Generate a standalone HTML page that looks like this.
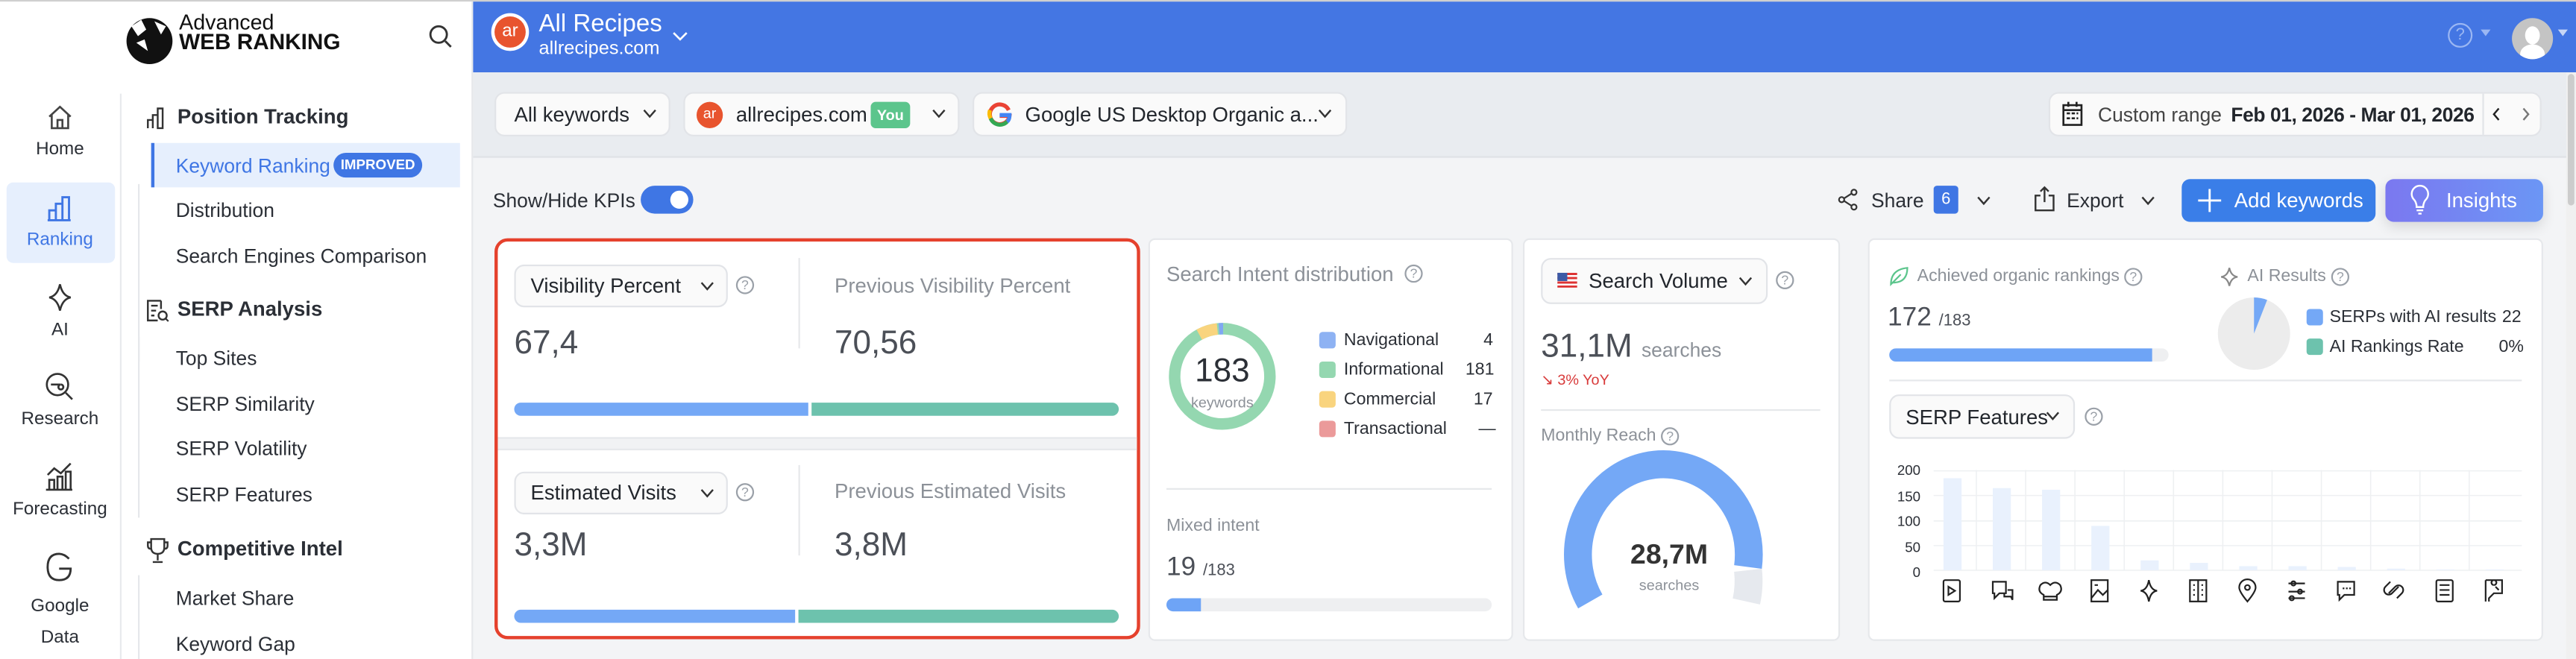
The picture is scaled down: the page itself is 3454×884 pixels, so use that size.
<!DOCTYPE html>
<html><head><meta charset="utf-8">
<style>
*{box-sizing:border-box;margin:0;padding:0}
html,body{width:3454px;height:884px;overflow:hidden;background:#f3f4f6}
#w{position:absolute;left:0;top:0;width:1568px;height:401px;transform-origin:0 0;transform:scale(2.2028,2.2045);font-family:"Liberation Sans",sans-serif;color:#2b2f36;background:#f3f4f6}
.a{position:absolute;white-space:nowrap}
.t{font-size:12px}
.card{position:absolute;background:#fff;border:1px solid #e6e8eb;border-radius:4px}
.dd{position:absolute;background:#fafafa;border:1px solid #e2e4e8;border-radius:6px;font-size:12.5px;color:#22262c}
.q{position:absolute;width:11px;height:11px;border:1px solid #9aa0a8;border-radius:50%;font-size:8px;color:#9aa0a8;text-align:center;line-height:10px}
.gray{color:#8c9198}
svg{position:absolute;overflow:visible}
</style></head><body><div id="w">
<div class="a" style="left:0;top:0;width:1568px;height:1px;background:#cfcfcf"></div>
<div class="a" style="left:0;top:1px;width:288px;height:400px;background:#fff;border-right:1px solid #e6e8eb"></div>
<div class="a" style="left:73px;top:57px;width:1px;height:344px;background:#e8eaed"></div>
<svg style="left:74px;top:6px" width="34" height="34" viewBox="0 0 34 34"><circle cx="17" cy="19" r="14" fill="#111"/><path d="M6 10 L12 6 L15 12 L10 16 Z M20 7 L27 10 L24 15 Z M9 20 L14 18 L16 25 Z" fill="#fff"/></svg>
<div class="a" style="left:109px;top:8px;font-size:13px;line-height:12px;color:#111">Advanced<br><b style="font-size:13.5px">WEB RANKING</b></div>
<svg style="left:261px;top:15px" width="14" height="14" viewBox="0 0 14 14"><circle cx="6" cy="6" r="5" fill="none" stroke="#333" stroke-width="1.3"/><path d="M10 10 L13.5 13.5" stroke="#333" stroke-width="1.3"/></svg>
<svg style="left:28px;top:63px" width="17" height="17" viewBox="0 0 17 17"><path d="M2 8 L8.5 2 L15 8 M3.5 7 V15 H13.5 V7 M7 15 V10 H10 V15" fill="none" stroke="#444" stroke-width="1.2"/></svg>
<div class="a" style="left:0;width:73px;top:85px;text-align:center;font-size:11px">Home</div>
<div class="a" style="left:4px;top:111px;width:66px;height:49px;background:#e6effd;border-radius:4px"></div>
<svg style="left:28px;top:119px" width="17" height="16" viewBox="0 0 17 16"><path d="M2 15 V9 H6 V15 M6 15 V5 H10 V15 M10 15 V1 H14 V15 Z M1 15 H15" fill="none" stroke="#3f76e4" stroke-width="1.3"/></svg>
<div class="a" style="left:0;width:73px;top:140px;text-align:center;font-size:11px;color:#3f76e4">Ranking</div>
<svg style="left:29px;top:172px" width="15" height="18" viewBox="0 0 15 18"><path d="M7.5 1 Q9 8 14 9 Q9 10 7.5 17 Q6 10 1 9 Q6 8 7.5 1Z" fill="none" stroke="#333" stroke-width="1.2"/></svg>
<div class="a" style="left:0;width:73px;top:195px;text-align:center;font-size:11px">AI</div>
<svg style="left:27px;top:226px" width="18" height="18" viewBox="0 0 18 18"><circle cx="8" cy="8" r="6.5" fill="none" stroke="#333" stroke-width="1.2"/><path d="M13 13 L17 17 M4 8 H10 M10 8 a1.5 1.5 0 1 0 0.1 0" fill="none" stroke="#333" stroke-width="1.2"/></svg>
<div class="a" style="left:0;width:73px;top:249px;text-align:center;font-size:11px">Research</div>
<svg style="left:28px;top:281px" width="17" height="18" viewBox="0 0 17 18"><path d="M1 8 L5 4 L9 7 L15 1 M2 17 V11 H5 V17 M7 17 V9 H10 V17 M12 17 V6 H15 V17 M0 17 H16" fill="none" stroke="#333" stroke-width="1.2"/></svg>
<div class="a" style="left:0;width:73px;top:304px;text-align:center;font-size:11px">Forecasting</div>
<svg style="left:28px;top:336px" width="17" height="18" viewBox="0 0 17 18"><path d="M14 4 Q11 1 8 1 Q1 1 1 9 Q1 17 8 17 Q15 17 15 10 H8" fill="none" stroke="#333" stroke-width="1.3"/></svg>
<div class="a" style="left:0;width:73px;top:360px;text-align:center;font-size:11px;line-height:19px">Google<br>Data</div>
<svg style="left:89px;top:65px" width="14" height="14" viewBox="0 0 14 14"><path d="M1 13 V8 H4 V13 M4 13 V5 H7 V13 M7 13 V1 H10 V13 Z" fill="none" stroke="#333" stroke-width="1.1"/></svg>
<div class="a" style="left:108px;top:64px;font-size:12.5px;font-weight:bold">Position Tracking</div>
<div class="a" style="left:84px;top:112px;width:1px;height:108px;background:#e6e8eb"></div>
<div class="a" style="left:92px;top:87px;width:188px;height:27px;background:#e6effd;border-left:2px solid #3f76e4"></div>
<div class="a t" style="left:107px;top:94px;color:#3f76e4">Keyword Ranking</div>
<div class="a" style="left:203px;top:93px;width:54px;height:15px;border-radius:8px;background:#3f76e4;color:#fff;font-size:8.5px;font-weight:bold;text-align:center;line-height:15px">IMPROVED</div>
<div class="a t" style="left:107px;top:121px">Distribution</div>
<div class="a t" style="left:107px;top:149px">Search Engines Comparison</div>
<svg style="left:89px;top:182px" width="14" height="14" viewBox="0 0 14 14"><path d="M9 1 H1 V13 H7 M9 1 V6 M3 4 H7 M3 7 H6 M3 10 H5" fill="none" stroke="#333" stroke-width="1.1"/><circle cx="10" cy="10" r="2.5" fill="none" stroke="#333" stroke-width="1.1"/><path d="M12 12 L13.5 13.5" stroke="#333"/></svg>
<div class="a" style="left:108px;top:181px;font-size:12.5px;font-weight:bold">SERP Analysis</div>
<div class="a" style="left:84px;top:205px;width:1px;height:110px;background:#e6e8eb"></div>
<div class="a t" style="left:107px;top:211px">Top Sites</div>
<div class="a t" style="left:107px;top:239px">SERP Similarity</div>
<div class="a t" style="left:107px;top:266px">SERP Volatility</div>
<div class="a t" style="left:107px;top:294px">SERP Features</div>
<svg style="left:89px;top:327px" width="14" height="16" viewBox="0 0 14 16"><path d="M3 1 H11 V6 Q11 10 7 10 Q3 10 3 6 Z M3 3 H1 V5 Q1 7 3 7 M11 3 H13 V5 Q13 7 11 7 M7 10 V14 M4 15 H10" fill="none" stroke="#333" stroke-width="1.1"/></svg>
<div class="a" style="left:108px;top:327px;font-size:12.5px;font-weight:bold">Competitive Intel</div>
<div class="a" style="left:84px;top:350px;width:1px;height:51px;background:#e6e8eb"></div>
<div class="a t" style="left:107px;top:357px">Market Share</div>
<div class="a t" style="left:107px;top:385px">Keyword Gap</div>
<!-- header -->
<div class="a" style="left:288px;top:1px;width:1280px;height:43px;background:#4476e3"></div>
<div class="a" style="left:299px;top:8px;width:23px;height:23px;border-radius:50%;background:#fff"></div>
<div class="a" style="left:301px;top:10px;width:19px;height:19px;border-radius:50%;background:#e8542e;color:#fff;font-size:11px;text-align:center;line-height:18px">ar</div>
<div class="a" style="left:328px;top:6px;font-size:15px;color:#fff">All Recipes</div>
<div class="a" style="left:328px;top:24px;font-size:11.5px;color:#fff">allrecipes.com</div>
<svg style="left:409px;top:19px" width="10" height="6" viewBox="0 0 10 6"><path d="M1 1 L5 5 L9 1" fill="none" stroke="#fff" stroke-width="1.2"/></svg>
<div class="a" style="left:1490px;top:14px;width:15px;height:15px;border:1.3px solid #9bb7f3;border-radius:50%;color:#9bb7f3;font-size:10px;text-align:center;line-height:13px">?</div>
<div class="a" style="left:1510px;top:18px;width:0;height:0;border:3px solid transparent;border-top:4px solid #9bb7f3"></div>
<div class="a" style="left:1529px;top:11px;width:25px;height:25px;border-radius:50%;background:#c4c4c4;overflow:hidden"><div style="position:absolute;left:8px;top:5px;width:9px;height:11px;border-radius:50%;background:#fff"></div><div style="position:absolute;left:5px;top:16px;width:15px;height:12px;border-radius:50%;background:#fff"></div></div>
<div class="a" style="left:1557px;top:18px;width:0;height:0;border:3px solid transparent;border-top:4px solid #c7d6f6"></div>
<!-- filter bar -->
<div class="a" style="left:288px;top:44px;width:1280px;height:52px;background:#e9ecf0;border-bottom:1px solid #dfe2e6"></div>
<div class="dd" style="left:301px;top:56px;width:107px;height:27px"><span class="a" style="left:11px;top:6px">All keywords</span></div>
<svg style="left:391px;top:66px" width="9" height="6" viewBox="0 0 9 6"><path d="M1 1 L4.5 5 L8 1" fill="none" stroke="#333" stroke-width="1.1"/></svg>
<div class="dd" style="left:416px;top:56px;width:168px;height:27px"><span class="a" style="left:7px;top:5px;width:16px;height:16px;border-radius:50%;background:#e8542e;color:#fff;font-size:9px;text-align:center;line-height:15px">ar</span><span class="a" style="left:31px;top:6px">allrecipes.com</span><span class="a" style="left:113px;top:5px;width:24px;height:16px;border-radius:3px;background:#5cc58c;color:#fff;font-size:9px;font-weight:bold;text-align:center;line-height:16px">You</span></div>
<svg style="left:567px;top:66px" width="9" height="6" viewBox="0 0 9 6"><path d="M1 1 L4.5 5 L8 1" fill="none" stroke="#333" stroke-width="1.1"/></svg>
<div class="dd" style="left:592px;top:56px;width:228px;height:27px"><span class="a" style="left:31px;top:6px">Google US Desktop Organic a...</span></div>
<svg style="left:601px;top:62px" width="15" height="15" viewBox="0 0 15 15"><path d="M13 5 A6 6 0 1 0 13.5 8.5 H7.5" fill="none" stroke="#ea4335" stroke-width="2.4"/><path d="M2 10 A6 6 0 0 0 12 12" fill="none" stroke="#34a853" stroke-width="2.4"/><path d="M7.5 8 H13.5 Q13.5 11 12 12" fill="none" stroke="#4285f4" stroke-width="2.4"/><path d="M1.6 5 A6 6 0 0 0 2 10" fill="none" stroke="#fbbc05" stroke-width="2.4"/></svg>
<svg style="left:802px;top:66px" width="9" height="6" viewBox="0 0 9 6"><path d="M1 1 L4.5 5 L8 1" fill="none" stroke="#333" stroke-width="1.1"/></svg>
<div class="dd" style="left:1247px;top:56px;width:300px;height:27px;font-size:12px"><span class="a" style="left:29px;top:6px;color:#444">Custom range</span><span class="a" style="left:110px;top:6px;font-weight:bold;color:#22262c;letter-spacing:-0.2px">Feb 01, 2026 - Mar 01, 2026</span><span class="a" style="left:263px;top:0;width:1px;height:25px;background:#e2e4e8"></span></div>
<svg style="left:1255px;top:61px" width="13" height="16" viewBox="0 0 13 16"><rect x="1" y="3" width="11" height="12" fill="none" stroke="#222" stroke-width="1.2"/><path d="M1 6 H12 M4 1 V4 M9 1 V4" stroke="#222" stroke-width="1.2"/><path d="M3 8 h2 M6 8 h2 M9 8 h1 M3 11 h2 M6 11 h2 M9 11 h1" stroke="#222" stroke-width="1.2"/></svg>
<svg style="left:1517px;top:65px" width="5" height="9" viewBox="0 0 5 9"><path d="M4 1 L1 4.5 L4 8" fill="none" stroke="#222" stroke-width="1.1"/></svg>
<svg style="left:1535px;top:65px" width="5" height="9" viewBox="0 0 5 9"><path d="M1 1 L4 4.5 L1 8" fill="none" stroke="#777" stroke-width="1.1"/></svg>
<!-- toolbar -->
<div class="a t" style="left:300px;top:115px">Show/Hide KPIs</div>
<div class="a" style="left:390px;top:113px;width:32px;height:17px;border-radius:9px;background:#3f76e4"><div style="position:absolute;left:18px;top:3px;width:11px;height:11px;border-radius:50%;background:#fff"></div></div>
<svg style="left:1119px;top:115px" width="12" height="13" viewBox="0 0 12 13"><circle cx="9.5" cy="2" r="1.6" fill="none" stroke="#333"/><circle cx="2" cy="6.5" r="1.6" fill="none" stroke="#333"/><circle cx="9.5" cy="11" r="1.6" fill="none" stroke="#333"/><path d="M3.5 5.7 L8 2.8 M3.5 7.3 L8 10.2" stroke="#333"/></svg>
<div class="a t" style="left:1139px;top:115px">Share</div>
<div class="a" style="left:1177px;top:113px;width:15px;height:17px;border-radius:2px;background:#3f76e4;color:#fff;font-size:10px;text-align:center;line-height:17px">6</div>
<svg style="left:1203px;top:119px" width="9" height="6" viewBox="0 0 9 6"><path d="M1 1 L4.5 5 L8 1" fill="none" stroke="#333" stroke-width="1.1"/></svg>
<svg style="left:1238px;top:113px" width="13" height="16" viewBox="0 0 13 16"><path d="M4 6 H1 V15 H12 V6 H9 M6.5 1 V10 M4 3.5 L6.5 1 L9 3.5" fill="none" stroke="#333" stroke-width="1.1"/></svg>
<div class="a t" style="left:1258px;top:115px">Export</div>
<svg style="left:1303px;top:119px" width="9" height="6" viewBox="0 0 9 6"><path d="M1 1 L4.5 5 L8 1" fill="none" stroke="#333" stroke-width="1.1"/></svg>
<div class="a" style="left:1328px;top:109px;width:118px;height:26px;border-radius:5px;background:#3a7ee8"></div>
<svg style="left:1337px;top:114px" width="16" height="16" viewBox="0 0 16 16"><path d="M8 1 V15 M1 8 H15" stroke="#fff" stroke-width="1.3"/></svg>
<div class="a" style="left:1360px;top:115px;font-size:12.5px;color:#fff">Add keywords</div>
<div class="a" style="left:1452px;top:109px;width:96px;height:26px;border-radius:5px;background:linear-gradient(90deg,#7b78f0,#6b96f5);box-shadow:0 3px 8px rgba(0,0,0,.12)"></div>
<svg style="left:1467px;top:113px" width="12" height="18" viewBox="0 0 12 18"><path d="M4 13 Q4 10 2 8 A5 5 0 1 1 10 8 Q8 10 8 13 Z M4 15 H8 M5 17 H7" fill="none" stroke="#fff" stroke-width="1.1"/></svg>
<div class="a" style="left:1489px;top:115px;font-size:12.5px;color:#fff">Insights</div>
<!-- KPI card -->
<div class="card" style="left:301px;top:145px;width:393px;height:244px;border:2px solid #e5412d;border-radius:8px;overflow:hidden">
 <div class="a" style="left:0;top:119px;width:393px;height:8px;background:#f1f2f4;border-top:1px solid #e6e8eb;border-bottom:1px solid #e6e8eb"></div>
</div>
<div class="dd" style="left:313px;top:161px;width:130px;height:26px"><span class="a" style="left:9px;top:5px">Visibility Percent</span></div>
<svg style="left:426px;top:171px" width="9" height="6" viewBox="0 0 9 6"><path d="M1 1 L4.5 5 L8 1" fill="none" stroke="#333" stroke-width="1.1"/></svg>
<div class="q" style="left:448px;top:168px">?</div>
<div class="a" style="left:486px;top:157px;width:1px;height:55px;background:#e6e8eb"></div>
<div class="a gray" style="left:508px;top:167px;font-size:12.5px">Previous Visibility Percent</div>
<div class="a" style="left:313px;top:198px;font-size:20px;color:#4b4f57">67,4</div>
<div class="a" style="left:508px;top:198px;font-size:20px;color:#4b4f57">70,56</div>
<div class="a" style="left:313px;top:245px;width:179px;height:8px;border-radius:4px 0 0 4px;background:#74a8f6"></div>
<div class="a" style="left:494px;top:245px;width:187px;height:8px;border-radius:0 4px 4px 0;background:#6dc2ad"></div>
<div class="dd" style="left:313px;top:287px;width:130px;height:26px"><span class="a" style="left:9px;top:5px">Estimated Visits</span></div>
<svg style="left:426px;top:297px" width="9" height="6" viewBox="0 0 9 6"><path d="M1 1 L4.5 5 L8 1" fill="none" stroke="#333" stroke-width="1.1"/></svg>
<div class="q" style="left:448px;top:294px">?</div>
<div class="a" style="left:486px;top:283px;width:1px;height:55px;background:#e6e8eb"></div>
<div class="a gray" style="left:508px;top:292px;font-size:12.5px">Previous Estimated Visits</div>
<div class="a" style="left:313px;top:321px;font-size:20px;color:#4b4f57">3,3M</div>
<div class="a" style="left:508px;top:321px;font-size:20px;color:#4b4f57">3,8M</div>
<div class="a" style="left:313px;top:371px;width:171px;height:8px;border-radius:4px 0 0 4px;background:#74a8f6"></div>
<div class="a" style="left:486px;top:371px;width:195px;height:8px;border-radius:0 4px 4px 0;background:#6dc2ad"></div>
<!-- intent card -->
<div class="card" style="left:699px;top:145px;width:222px;height:245px"></div>
<div class="a gray" style="left:710px;top:160px;font-size:12.5px">Search Intent distribution</div>
<div class="q" style="left:855px;top:161px">?</div>
<svg style="left:710px;top:195px" width="68" height="68" viewBox="0 0 68 68"><circle cx="34" cy="34" r="29" fill="none" stroke="#94d7b0" stroke-width="7"/><path d="M 20 8.6 A29 29 0 0 1 31 5.2" fill="none" stroke="#f9d47e" stroke-width="7"/><path d="M 32 5.1 A29 29 0 0 1 34.5 5" fill="none" stroke="#7fa8f2" stroke-width="7"/></svg>
<div class="a" style="left:710px;width:68px;top:215px;text-align:center;font-size:20px;color:#2b2f36">183</div>
<div class="a gray" style="left:710px;width:68px;top:240px;text-align:center;font-size:9px">keywords</div>
<div class="a" style="left:803px;top:202px;width:10px;height:10px;border-radius:2px;background:#8eb2f3"></div>
<div class="a" style="left:818px;top:201px;font-size:10.5px">Navigational</div><div class="a" style="left:903px;top:201px;font-size:10.5px">4</div>
<div class="a" style="left:803px;top:220px;width:10px;height:10px;border-radius:2px;background:#94d7b0"></div>
<div class="a" style="left:818px;top:219px;font-size:10.5px">Informational</div><div class="a" style="left:892px;top:219px;font-size:10.5px">181</div>
<div class="a" style="left:803px;top:238px;width:10px;height:10px;border-radius:2px;background:#f9d47e"></div>
<div class="a" style="left:818px;top:237px;font-size:10.5px">Commercial</div><div class="a" style="left:897px;top:237px;font-size:10.5px">17</div>
<div class="a" style="left:803px;top:256px;width:10px;height:10px;border-radius:2px;background:#eb9a9a"></div>
<div class="a" style="left:818px;top:255px;font-size:10.5px">Transactional</div><div class="a" style="left:900px;top:255px;font-size:10.5px">—</div>
<div class="a" style="left:710px;top:297px;width:198px;height:1px;background:#e6e8eb"></div>
<div class="a gray" style="left:710px;top:314px;font-size:10.5px">Mixed intent</div>
<div class="a" style="left:710px;top:337px;font-size:16px;color:#4b4f57">19 <span style="font-size:10px">/183</span></div>
<div class="a" style="left:710px;top:364px;width:198px;height:8px;border-radius:4px;background:#eeeff1"><div style="width:21px;height:8px;border-radius:4px 0 0 4px;background:#6ea4f6"></div></div>
<!-- volume card -->
<div class="card" style="left:927px;top:145px;width:193px;height:245px"></div>
<div class="dd" style="left:938px;top:157px;width:138px;height:28px"><span class="a" style="left:28px;top:6px">Search Volume</span></div>
<div class="a" style="left:948px;top:166px;width:12px;height:9px;background:repeating-linear-gradient(#d33 0 1.3px,#fff 1.3px 2.6px)"><div style="width:6px;height:5px;background:#3c5aa6"></div></div>
<svg style="left:1058px;top:168px" width="9" height="6" viewBox="0 0 9 6"><path d="M1 1 L4.5 5 L8 1" fill="none" stroke="#333" stroke-width="1.1"/></svg>
<div class="q" style="left:1081px;top:165px">?</div>
<div class="a" style="left:938px;top:200px;font-size:20px;color:#4b4f57">31,1M <span style="font-size:12px;color:#8c9198">searches</span></div>
<div class="a" style="left:938px;top:226px;font-size:9px;color:#d83a3a">↘ 3% YoY</div>
<div class="a" style="left:938px;top:249px;width:170px;height:1px;background:#e6e8eb"></div>
<div class="a gray" style="left:938px;top:259px;font-size:10.5px">Monthly Reach</div>
<div class="q" style="left:1011px;top:260px">?</div>
<svg style="left:960px;top:283px" width="112" height="85" viewBox="0 0 112 85"><path d="M8 83 A52 55 0 1 1 104 62" fill="none" stroke="#74a8f6" stroke-width="17"/><path d="M104 64 A52 55 0 0 1 103 83" fill="none" stroke="#e6e9ee" stroke-width="17"/></svg>
<div class="a" style="left:960px;width:112px;top:328px;text-align:center;font-size:17px;font-weight:bold;color:#333">28,7M</div>
<div class="a gray" style="left:960px;width:112px;top:351px;text-align:center;font-size:9px">searches</div>
<!-- right card -->
<div class="card" style="left:1137px;top:145px;width:411px;height:245px"></div>
<svg style="left:1150px;top:162px" width="12" height="12" viewBox="0 0 12 12"><path d="M1 11 Q1 2 11 1 Q11 10 2 10 Z M1 11 L7 5" fill="none" stroke="#5cc58c" stroke-width="1"/></svg>
<div class="a gray" style="left:1167px;top:162px;font-size:10.5px">Achieved organic rankings</div>
<div class="q" style="left:1293px;top:163px">?</div>
<div class="a" style="left:1149px;top:185px;font-size:16px;color:#4b4f57">172 <span style="font-size:10px">/183</span></div>
<div class="a" style="left:1150px;top:212px;width:170px;height:8px;border-radius:4px;background:#eeeff1"><div style="width:160px;height:8px;border-radius:4px 0 0 4px;background:#6ea4f6"></div></div>
<svg style="left:1351px;top:162px" width="12" height="13" viewBox="0 0 12 13"><path d="M6 1 Q7 6 11 6.5 Q7 7 6 12 Q5 7 1 6.5 Q5 6 6 1Z" fill="none" stroke="#888" stroke-width="1"/></svg>
<div class="a gray" style="left:1368px;top:162px;font-size:10.5px">AI Results</div>
<div class="q" style="left:1419px;top:163px">?</div>
<svg style="left:1350px;top:181px" width="44" height="44" viewBox="0 0 44 44"><circle cx="22" cy="22" r="22" fill="#ececec"/><path d="M22 22 L22 0 A22 22 0 0 1 30 1.5 Z" fill="#74a8f6"/></svg>
<div class="a" style="left:1404px;top:188px;width:10px;height:10px;border-radius:2px;background:#74a8f6"></div>
<div class="a" style="left:1418px;top:187px;font-size:10.5px">SERPs with AI results</div><div class="a" style="left:1523px;top:187px;font-size:10.5px">22</div>
<div class="a" style="left:1404px;top:206px;width:10px;height:10px;border-radius:2px;background:#6dc2ad"></div>
<div class="a" style="left:1418px;top:205px;font-size:10.5px">AI Rankings Rate</div><div class="a" style="left:1521px;top:205px;font-size:10.5px">0%</div>
<div class="a" style="left:1150px;top:231px;width:385px;height:1px;background:#e6e8eb"></div>
<div class="dd" style="left:1150px;top:240px;width:113px;height:27px"><span class="a" style="left:9px;top:6px">SERP Features</span></div>
<svg style="left:1245px;top:250px" width="9" height="6" viewBox="0 0 9 6"><path d="M1 1 L4.5 5 L8 1" fill="none" stroke="#333" stroke-width="1.1"/></svg>
<div class="q" style="left:1269px;top:248px">?</div>
<div class="a" style="left:1154px;top:279px;font-size:8.5px;line-height:15.5px;text-align:right;width:15px">200<br>150<br>100<br>50<br>0</div>
<svg style="left:1177px;top:286px" width="358" height="62" viewBox="0 0 358 62">
<g stroke="#eef0f2" stroke-width="0.7"><path d="M0 0.5 H358 M0 15.5 H358 M0 31 H358 M0 46 H358 M0 61 H358"/><path d="M26 0 V61 M56 0 V61 M86 0 V61 M116 0 V61 M146 0 V61 M176 0 V61 M206 0 V61 M236 0 V61 M266 0 V61 M296 0 V61 M326 0 V61"/></g>
<g fill="#e9f1fd"><rect x="6" y="5" width="11" height="56"/><rect x="36" y="11" width="11" height="50"/><rect x="66" y="12" width="11" height="49"/><rect x="96" y="34" width="11" height="27"/><rect x="126" y="55" width="11" height="6"/><rect x="156" y="56.5" width="11" height="4.5"/><rect x="186" y="58.5" width="11" height="2.5"/><rect x="216" y="58.5" width="11" height="2.5"/><rect x="246" y="59" width="11" height="2"/><rect x="276" y="60" width="11" height="1"/><rect x="306" y="60.5" width="11" height="0.5"/><rect x="336" y="60.5" width="11" height="0.5"/></g>
</svg>
<svg style="left:1182px;top:352px" width="350" height="16" viewBox="0 0 350 16" fill="none" stroke="#222" stroke-width="1">
<rect x="1" y="1" width="10" height="13" rx="1"/><path d="M4 5 L8 7.5 L4 10Z"/>
<path d="M31 2 H39 V9 H35 L32 12 V9 H31Z M38 9 V11 H42 L43 13 V7 H40"/>
<path d="M62 10 Q58 8 60 4 Q63 1 66 4 Q69 1 72 4 Q74 8 70 10 V13 H62Z M62 11 H70"/>
<rect x="91" y="1" width="10" height="13"/><path d="M91 12 L95 7 L98 10 L101 7 M93 4 h2"/>
<path d="M126 1 Q127 7 131 7.5 Q127 8 126 14 Q125 8 121 7.5 Q125 7 126 1Z"/>
<rect x="151" y="1" width="10" height="13"/><path d="M156 1 V14 M153 4 h1 M153 7 h1 M153 10 h1 M158 4 h1 M158 7 h1 M158 10 h1"/>
<path d="M186 14 Q181 8 181 5.5 A5 5 0 0 1 191 5.5 Q191 8 186 14Z"/><circle cx="186" cy="5.5" r="1.5"/>
<path d="M211 3 H221 M211 8 H221 M211 12 H221"/><circle cx="214" cy="3" r="1.3"/><circle cx="218" cy="8" r="1.3"/><circle cx="213" cy="12" r="1.3"/>
<path d="M241 2 H251 V10 H245 L242 13 V10 H241Z M244 6 h1 M246 6 h1 M248 6 h1"/>
<path d="M272 9 L276 5 A2.5 2.5 0 0 1 280 9 L277 12 M278 5 L274 9 A2.5 2.5 0 0 1 270 5 L273 2"/>
<rect x="301" y="1" width="10" height="13" rx="1"/><path d="M303 4 H309 M303 7 H309 M303 10 H309"/>
<path d="M331 1 H341 V9 H336 L333 12 V14 M331 1 V14 M336 4 A1.5 1.5 0 1 1 336.1 4 M337 5 L339 7"/>
</svg>
<div class="a" style="left:1562px;top:44px;width:6px;height:357px;background:#f0f0f0"></div>
<div class="a" style="left:1563px;top:45px;width:4px;height:80px;border-radius:2px;background:#ccc"></div>
</div></body></html>
